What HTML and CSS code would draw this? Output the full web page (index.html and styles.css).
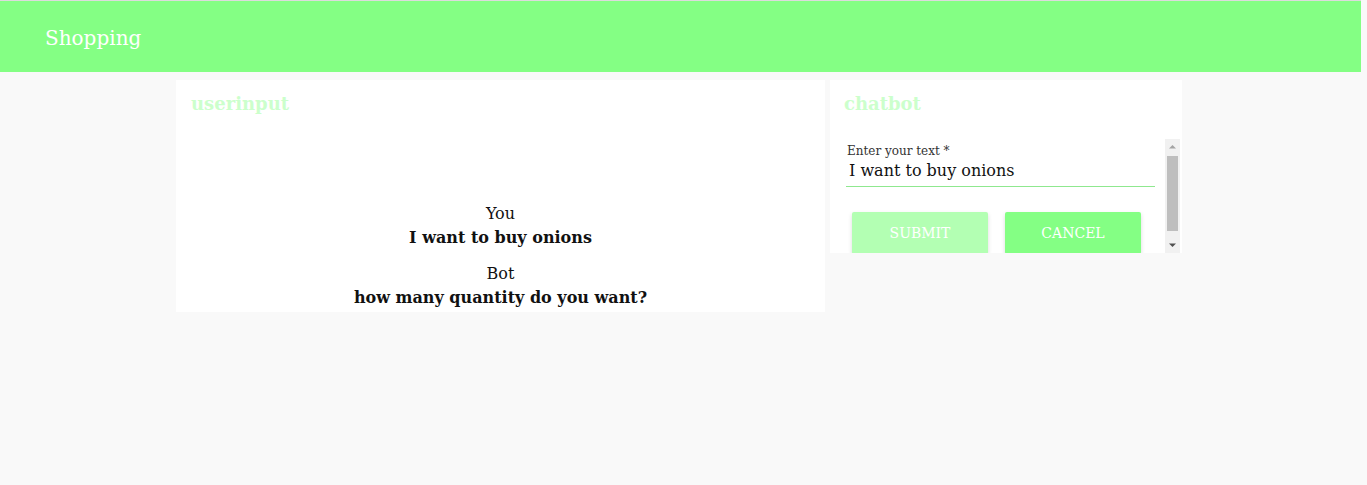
FILE: index.html
```html
<!DOCTYPE html>
<html>
<head>
<meta charset="utf-8">
<link rel="stylesheet" href="styles.css">
</head>
<body>
<header class="topbar"><span class="brand">Shopping</span></header>
<main class="content">
  <section class="card card-left">
    <h2 class="card-title">userinput</h2>
    <div class="messages">
      <div class="msg"><div class="who">You</div><div class="text">I want to buy onions</div></div>
      <div class="msg"><div class="who">Bot</div><div class="text">how many quantity do you want?</div></div>
    </div>
  </section>
  <section class="card card-right">
    <h2 class="card-title">chatbot</h2>
    <div class="scrollbox">
      <div class="scroll-content">
        <div class="field">
          <label class="label">Enter your text *</label>
          <div class="input">I want to buy onions</div>
        </div>
        <div class="buttons">
          <button class="btn btn-submit">SUBMIT</button>
          <button class="btn btn-cancel">CANCEL</button>
        </div>
      </div>
      <div class="scrollbar">
        <div class="sb-btn"><svg width="15" height="16" viewBox="0 0 15 16"><path d="M4 9.5h7L7.5 6z" fill="#a3a3a3"/></svg></div>
        <div class="sb-track"><div class="sb-thumb"></div></div>
        <div class="sb-btn"><svg width="15" height="16" viewBox="0 0 15 16"><path d="M4 6.5h7L7.5 10z" fill="#505050"/></svg></div>
      </div>
    </div>
  </section>
</main>
</body>
</html>
```
FILE: styles.css
```css
html, body { margin: 0; padding: 0; }
body {
  background: #f9f9f9;
  font-family: "DejaVu Serif", Georgia, serif;
  height: 485px;
  overflow: hidden;
}
.topbar {
  width: 1361px;
  height: 72px;
  box-sizing: border-box;
  border-top: 1px solid #dcdcdc;
  background: #84ff84;
  display: flex;
  align-items: center;
  padding-left: 45px;
}
.brand {
  color: #fff;
  font-size: 20px;
  margin-top: 2px;
}
.content {
  display: flex;
  align-items: flex-start;
  gap: 5px;
  padding: 8px 0 0 176px;
}
.card { background: #fff; }
.card-left { width: 649px; height: 232px; }
.card-right { width: 352px; height: 173px; }
.card-title {
  margin: 0;
  padding: 13px 15px 0;
  font-size: 18px;
  font-weight: bold;
  color: #ccffcc;
  line-height: 22px;
}
.card-right .card-title { padding-left: 14px; }
.messages {
  padding-top: 87px;
  text-align: center;
  color: #111;
}
.msg { margin-bottom: 13px; }
.who { font-size: 16px; line-height: 24px; }
.text { font-size: 16px; font-weight: bold; line-height: 23px; }
.scrollbox {
  display: flex;
  margin: 24px 2px 0 0;
  height: 114px;
}
.scroll-content {
  flex: 1;
  overflow: hidden;
  padding-left: 16px;
}
.scrollbar {
  width: 15px;
  display: flex;
  flex-direction: column;
  background: #f1f1f1;
}
.sb-btn { height: 16px; flex: none; }
.sb-btn svg { display: block; }
.sb-track { flex: 1; padding: 1px 2px 6px; display: flex; }
.sb-thumb { flex: 1; background: #bebebe; }
.field {
  width: 309px;
  padding-top: 5px;
}
.label {
  display: block;
  font-size: 12px;
  color: #333;
  line-height: 14px;
  padding-left: 1px;
}
.input {
  font-size: 16px;
  color: #111;
  line-height: 22px;
  padding: 2px 0 4px 3px;
  border-bottom: 1px solid #8fe88f;
}
.buttons {
  display: flex;
  gap: 17px;
  padding: 25px 0 14px 6px;
}
.btn {
  flex: none;
  width: 136px;
  height: 42px;
  border: none;
  border-radius: 2px;
  color: #fff;
  font-family: "DejaVu Serif", Georgia, serif;
  font-size: 14px;
  box-shadow: 0 2px 4px rgba(0,0,0,0.15);
}
.btn-submit { background: #b3ffb3; }
.btn-cancel { background: #84ff84; }
```
